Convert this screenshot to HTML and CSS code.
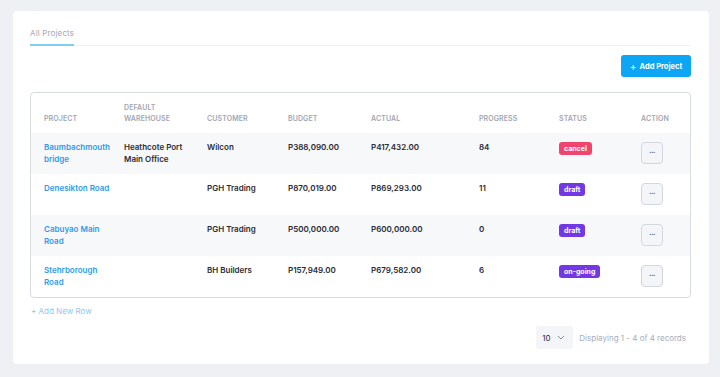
FILE: index.html
```html
<!DOCTYPE html>
<html>
<head>
<meta charset="utf-8">
<link rel="stylesheet" href="styles.css">
</head>
<body>
<div class="card">
  <div class="tabs">
    <div class="tab active">All Projects</div>
  </div>
  <div class="toolbar">
    <button class="btn-primary"><span class="plus">+</span> Add Project</button>
  </div>
  <div class="table-wrap">
    <table class="grid">
      <colgroup>
        <col class="c1"><col class="c2"><col class="c3"><col class="c4"><col class="c5"><col class="c6"><col class="c7"><col class="c8">
      </colgroup>
      <thead>
        <tr>
          <th>Project</th>
          <th>Default<br>Warehouse</th>
          <th>Customer</th>
          <th>Budget</th>
          <th>Actual</th>
          <th>Progress</th>
          <th>Status</th>
          <th>Action</th>
        </tr>
      </thead>
      <tbody>
        <tr class="alt">
          <td class="link">Baumbachmouth<br>bridge</td>
          <td>Heathcote Port<br>Main Office</td>
          <td>Wilcon</td>
          <td>P388,090.00</td>
          <td>P417,432.00</td>
          <td>84</td>
          <td><span class="badge cancel">cancel</span></td>
          <td><span class="act">···</span></td>
        </tr>
        <tr>
          <td class="link">Denesikton Road</td>
          <td></td>
          <td>PGH Trading</td>
          <td>P870,019.00</td>
          <td>P869,293.00</td>
          <td>11</td>
          <td><span class="badge draft">draft</span></td>
          <td><span class="act">···</span></td>
        </tr>
        <tr class="alt">
          <td class="link">Cabuyao Main<br>Road</td>
          <td></td>
          <td>PGH Trading</td>
          <td>P500,000.00</td>
          <td>P600,000.00</td>
          <td>0</td>
          <td><span class="badge draft">draft</span></td>
          <td><span class="act">···</span></td>
        </tr>
        <tr>
          <td class="link">Stehrborough<br>Road</td>
          <td></td>
          <td>BH Builders</td>
          <td>P157,949.00</td>
          <td>P679,582.00</td>
          <td>6</td>
          <td><span class="badge draft">on-going</span></td>
          <td><span class="act">···</span></td>
        </tr>
      </tbody>
    </table>
  </div>
  <div class="add-row">+ Add New Row</div>
  <div class="pager">
    <div class="per-page"><span>10</span>
      <svg width="8" height="5" viewBox="0 0 8 5"><path d="M1 1l3 3 3-3" fill="none" stroke="#8a8d99" stroke-width="1"/></svg>
    </div>
    <div class="count">Displaying 1 - 4 of 4 records</div>
  </div>
</div>
</body>
</html>
```
FILE: styles.css
```css
* { box-sizing: border-box; }
html, body { margin: 0; padding: 0; }
body {
  background: #eef0f4;
  font-family: "Inter", "Open Sans", sans-serif;
  font-size: 8px;
  color: #2b2b36;
  width: 720px;
  height: 377px;
  overflow: hidden;
}
.card {
  margin: 11px 11px 0 13px;
  height: 353px;
  background: #fff;
  border-radius: 4px;
  padding: 17px 18px 0 17px;
}
.tabs {
  border-bottom: 1px solid #f0f1f4;
  display: flex;
}
.tab {
  font-size: 8px;
  color: #a3a6b4;
  padding: 0 0 6px 0;
  line-height: 10px;
  letter-spacing: 0.15px;
}
.tab.active {
  border-bottom: 2px solid #7fcdf4;
  margin-bottom: -1px;
}
.toolbar {
  display: flex;
  justify-content: flex-end;
  margin-top: 9px;
}
.btn-primary {
  background: #0ca6f4;
  color: #fff;
  border: none;
  border-radius: 3px;
  height: 22px;
  width: 70px;
  font-family: inherit;
  font-size: 7.5px;
  font-weight: 700;
  padding: 0;
  display: flex;
  align-items: center;
  justify-content: center;
  gap: 3px;
}
.btn-primary .plus { font-weight: 400; font-size: 10px; line-height: 10px; }
.table-wrap {
  margin-top: 15px;
  border: 1px solid #d9dbe3;
  border-radius: 4px;
  overflow: hidden;
}
.grid {
  width: 100%;
  border-collapse: collapse;
  table-layout: fixed;
}
.c1 { width: 93px; }
.c2 { width: 83px; }
.c3 { width: 81px; }
.c4 { width: 83px; }
.c5 { width: 108px; }
.c6 { width: 80px; }
.c7 { width: 82px; }
th {
  text-align: left;
  vertical-align: bottom;
  font-size: 7px;
  font-weight: 600;
  color: #a3a6b4;
  text-transform: uppercase;
  height: 40px;
  padding: 0 0 9px 0;
  line-height: 11px;
  letter-spacing: 0.1px;
}
td {
  vertical-align: top;
  height: 41px;
  padding: 9px 0 0 0;
  line-height: 11.5px;
  font-weight: 600;
  color: #2b2b36;
}
th:first-child, td:first-child { padding-left: 13px; }
tr.alt td { background: #f6f8fa; }
td.link { color: #2e9bec; }
.badge {
  display: inline-block;
  color: #fff;
  font-size: 7px;
  font-weight: 700;
  height: 13px;
  line-height: 13px;
  padding: 0 5px;
  border-radius: 3px;
}
.cancel { background: #f0446f; }
.draft { background: #7338e6; }
.act {
  display: flex;
  align-items: center;
  justify-content: center;
  width: 22px;
  height: 22px;
  border: 1px solid #d4d7e0;
  border-radius: 4px;
  background: #f3f5f9;
  color: #6d7080;
  font-size: 8px;
  letter-spacing: -0.5px;
}
.add-row {
  margin-top: 8px;
  color: #8cc8f2;
  font-size: 8px;
  line-height: 10px;
  padding-left: 1px;
}
.pager {
  display: flex;
  justify-content: flex-end;
  align-items: center;
  margin-top: 10px;
  gap: 6px;
  padding-right: 5px;
}
.per-page {
  width: 37px;
  height: 23px;
  background: #f3f5f9;
  border-radius: 3px;
  display: flex;
  align-items: center;
  justify-content: space-between;
  padding: 0 8px 0 6px;
  font-size: 8px;
  color: #2b2b36;
}
.count {
  color: #a9acb9;
  font-size: 8px;
}
```
